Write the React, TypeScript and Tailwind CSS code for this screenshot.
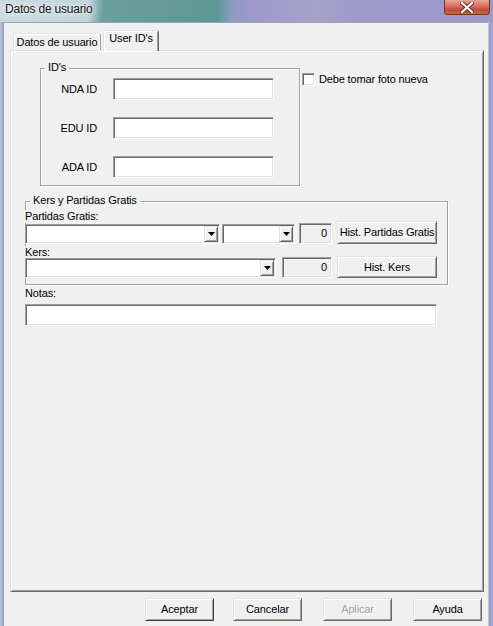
import React from "react";

// classic win32 bevels
const sunken =
  "border border-t-[#a0a0a0] border-l-[#a0a0a0] border-r-white border-b-white shadow-[inset_1px_1px_0_#696969,inset_-1px_-1px_0_#e3e3e3]";
const raised =
  "border border-t-[#e3e3e3] border-l-[#e3e3e3] border-r-[#696969] border-b-[#696969] shadow-[inset_1px_1px_0_#fff,inset_-1px_-1px_0_#a0a0a0] bg-[#f0f0f0]";
const etched = "border border-[#a0a0a0] shadow-[inset_1px_1px_0_#fff,1px_1px_0_#fff]";

const TitleBar = () => (
  <div className="h-[22px] flex justify-between bg-[linear-gradient(96deg,#cbd9e1_0%,#c2d3da_18%,#6b9f9d_21%,#5e9794_44%,#8a9cc0_47%,#9b98ca_50%,#a29ecb_58%,#a6a3c8_64%,#9d99c9_72%,#9c98ca_100%)]">
    <div className="pl-[5px] pt-[3px] text-[12px] tracking-[-0.2px] text-[#1b1b1b] [text-shadow:0_0_6px_#fff,0_0_10px_#fff]">
      Datos de usuario
    </div>
    <div className="mr-[3px] w-[46px] h-[15px] rounded-b-[4px] border border-t-0 border-[#7a3426] bg-[linear-gradient(180deg,#e6a596_0%,#d4705f_45%,#c14a35_70%,#c66a3e_100%)] flex items-center justify-center">
      <svg width="14" height="11" viewBox="0 0 14 11">
        <path d="M2 1l10 9M12 1L2 10" stroke="#5a2a20" strokeWidth="4" strokeLinecap="square" />
        <path d="M2 1l10 9M12 1L2 10" stroke="#fff" strokeWidth="2.2" strokeLinecap="square" />
      </svg>
    </div>
  </div>
);

const Arrow = () => (
  <div className={`w-[14px] ${raised} flex items-center justify-center`}>
    <svg width="7" height="4" viewBox="0 0 7 4">
      <path d="M0 0h7L3.5 4z" fill="#000" />
    </svg>
  </div>
);

const Combo = ({ className }: { className: string }) => (
  <div className={`${className} h-[20px] bg-white ${sunken} flex justify-end p-[1px]`}>
    <Arrow />
  </div>
);

const NumBox = ({ className }: { className: string }) => (
  <div className={`${className} bg-[#f0f0f0] ${sunken} flex items-center justify-end pr-[4px]`}>0</div>
);

const Button = ({ className, children }: { className: string; children: React.ReactNode }) => (
  <div className={`${className} ${raised} flex items-center justify-center`}>{children}</div>
);

const IdRow = ({ label }: { label: string }) => (
  <div className="flex items-center">
    <div className="w-[56px] text-right">{label}</div>
    <div className={`ml-[16px] w-[161px] h-[22px] bg-white ${sunken}`} />
  </div>
);

export default function App() {
  return (
    <div className="w-[493px] h-[626px] overflow-hidden flex flex-col bg-[#a3a8d4] font-['Liberation_Sans',Arial,sans-serif] text-[11px] leading-[13px] text-black tracking-[-0.15px]">
      <TitleBar />
      <div className="flex flex-1">
        <div className="w-[3px] bg-[linear-gradient(90deg,#b9c6de,#9ea8d2)]" />
        <div className="w-[485px] flex flex-col bg-[#f0f0f0] border-l border-t border-[#98a3b4]">
          {/* tabs */}
          <div className="mt-[7px] ml-[9px] h-[21px] -mb-px flex items-end relative z-10">
            <div className="mb-px w-[88px] h-[17px] rounded-t-[2px] border border-b-0 border-t-[#e3e3e3] border-l-[#e3e3e3] border-r-[#a0a0a0] shadow-[inset_1px_1px_0_#fff] flex items-center justify-center pt-px">
              Datos de usuario
            </div>
            <div className="ml-[2px] w-[56px] h-[21px] bg-[#f0f0f0] rounded-t-[2px] border border-b-0 border-t-[#e3e3e3] border-l-[#e3e3e3] border-r-[#696969] shadow-[inset_1px_1px_0_#fff,inset_-1px_0_0_#a0a0a0] flex justify-center pt-px">
              User ID's
            </div>
          </div>

          {/* tab page */}
          <div className={`ml-[6px] w-[474px] h-[542px] ${raised} flex flex-col`}>
            <div className="flex">
              <div className={`ml-[29px] mt-[17px] w-[260px] h-[118px] ${etched} flex flex-col`}>
                <div className="-mt-[8px] ml-[4px] px-[3px] w-fit bg-[#f0f0f0]">ID's</div>
                <div className="mt-[4px] flex flex-col gap-[17px]">
                  <IdRow label="NDA ID" />
                  <IdRow label="EDU ID" />
                  <IdRow label="ADA ID" />
                </div>
              </div>
              <div className="ml-[2px] mt-[22px] h-[13px] flex items-center">
                <div className={`w-[13px] h-[13px] bg-white ${sunken}`} />
                <div className="ml-[4px]">Debe tomar foto nueva</div>
              </div>
            </div>

            {/* kers */}
            <div className={`ml-[14px] mt-[15px] w-[423px] h-[84px] ${etched} flex flex-col`}>
              <div className="-mt-[8px] ml-[4px] px-[3px] w-fit bg-[#f0f0f0]">Kers y Partidas Gratis</div>
              <div className="mt-[3px] -ml-[2px] pl-px pr-[2px] w-fit bg-[#f0f0f0] relative">Partidas Gratis:</div>
              <div className="-mt-[2px] -ml-px flex items-end relative">
                <Combo className="w-[195px]" />
                <Combo className="ml-[2px] w-[73px]" />
                <NumBox className="ml-[4px] w-[33px] h-[21px]" />
                <Button className="ml-[5px] w-[100px] h-[23px]">Hist. Partidas Gratis</Button>
              </div>
              <div className="mt-[2px] -ml-[2px] pl-px pr-[2px] w-fit bg-[#f0f0f0] relative">Kers:</div>
              <div className="-mt-[3px] -ml-px flex items-end relative">
                <Combo className="w-[251px]" />
                <NumBox className="ml-[6px] w-[50px] h-[21px]" />
                <Button className="ml-[5px] w-[100px] h-[22px]">Hist. Kers</Button>
              </div>
            </div>

            <div className="ml-[14px] mt-[2px]">Notas:</div>
            <div className={`ml-[14px] mt-[4px] w-[412px] h-[22px] bg-white ${sunken}`} />
          </div>

          {/* dialog buttons */}
          <div className="mt-[6px] ml-[141px] flex">
            <Button className="w-[69px] h-[23px] !border-r-[#404040] !border-b-[#404040]">Aceptar</Button>
            <Button className="ml-[19px] w-[69px] h-[23px]">Cancelar</Button>
            <Button className="ml-[21px] w-[69px] h-[23px] text-[#a0a0a0] [text-shadow:1px_1px_0_#fff]">Aplicar</Button>
            <Button className="ml-[21px] w-[69px] h-[23px]">Ayuda</Button>
          </div>
        </div>
        <div className="flex-1 border-l border-[#c0c2d4] bg-[linear-gradient(90deg,#9c9dd0,#a7a6d6)]" />
      </div>
    </div>
  );
}
